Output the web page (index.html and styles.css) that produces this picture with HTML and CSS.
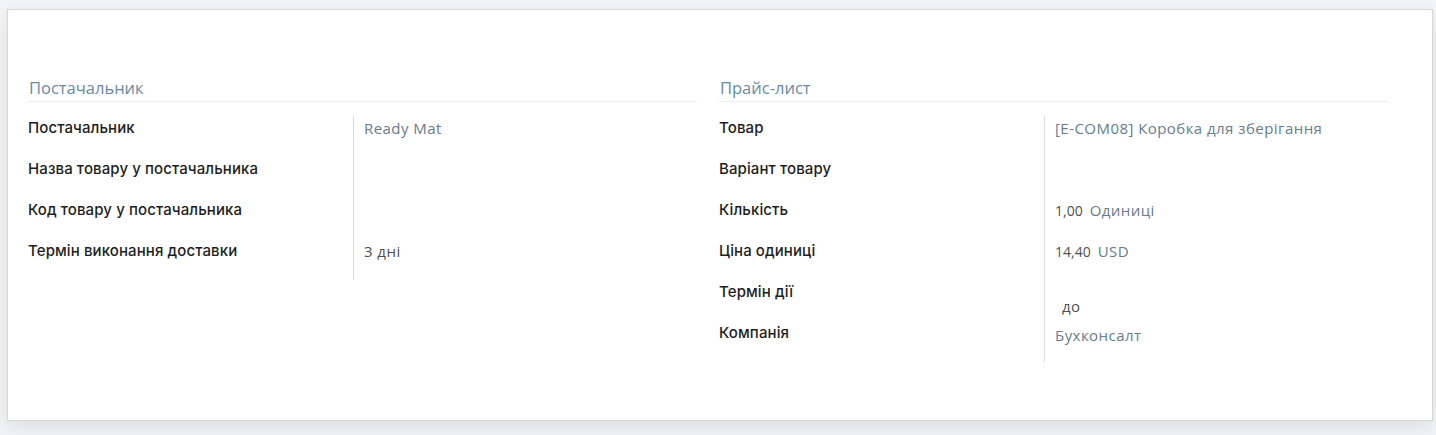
FILE: index.html
```html
<!DOCTYPE html>
<html lang="uk">
<head>
<meta charset="utf-8">
<title>Постачальник</title>
<link rel="stylesheet" href="styles.css">
</head>
<body>
<div class="sheet">
  <div class="groups">
    <section class="group">
      <h2 class="sep">Постачальник</h2>
      <div class="table">
        <div class="row"><div class="lbl">Постачальник</div><div class="val link">Ready Mat</div></div>
        <div class="row"><div class="lbl">Назва товару у постачальника</div><div class="val"></div></div>
        <div class="row"><div class="lbl">Код товару у постачальника</div><div class="val"></div></div>
        <div class="row"><div class="lbl">Термін виконання доставки</div><div class="val plain">3 дні</div></div>
      </div>
    </section>
    <section class="group">
      <h2 class="sep">Прайс-лист</h2>
      <div class="table">
        <div class="row"><div class="lbl">Товар</div><div class="val link">[E-COM08] Коробка для зберігання</div></div>
        <div class="row"><div class="lbl">Варіант товару</div><div class="val"></div></div>
        <div class="row"><div class="lbl">Кількість</div><div class="val lower"><span class="num">1,00</span><span class="link">Одиниці</span></div></div>
        <div class="row"><div class="lbl">Ціна одиниці</div><div class="val"><span class="num">14,40</span><span class="link">USD</span></div></div>
        <div class="row"><div class="lbl">Термін дії</div><div class="val dates"><span class="plain">до</span></div></div>
        <div class="row"><div class="lbl">Компанія</div><div class="val link company">Бухконсалт</div></div>
      </div>
    </section>
  </div>
</div>
</body>
</html>
```
FILE: styles.css
```css
html, body {
  margin: 0;
  padding: 0;
}
body {
  background: #f3f4f6;
  font-family: "Open Sans", "Noto Sans", sans-serif;
  width: 1436px;
  height: 435px;
  overflow: hidden;
}
.sheet {
  box-sizing: border-box;
  margin: 9px 0 0 7px;
  width: 1426px;
  height: 412px;
  background: #ffffff;
  border: 1px solid #d5d6d8;
  box-shadow: 0 6px 18px rgba(0, 0, 0, 0.09);
  padding: 67px 0 0 20px;
}
.groups {
  display: grid;
  grid-template-columns: 669px 669px;
  column-gap: 22px;
}
.sep {
  margin: 0 0 14px 0;
  font-size: 16.5px;
  font-weight: 400;
  color: #6a8aa6;
  line-height: 22px;
  padding: 0 0 2px 1px;
  border-bottom: 1px solid #eceef0;
}
.table {
  display: grid;
  grid-template-columns: 325px 1fr;
}
.row {
  display: contents;
}
.lbl {
  font-family: "Inter", "Open Sans", sans-serif;
  font-size: 15px;
  font-weight: 500;
  letter-spacing: 0.1px;
  color: #1e1e1e;
  height: 41px;
  line-height: 24px;
}
.val {
  border-left: 1px solid #dcdcdc;
  padding-left: 10px;
  height: 41px;
  line-height: 24px;
  font-size: 15px;
  letter-spacing: 0.45px;
  color: #4a4a4a;
}
.link { color: #687c8e; }
.plain { color: #505050; }
.num {
  color: #505050;
  margin-right: 7px;
  font-size: 14px;
  letter-spacing: 0;
}
.dates {
  box-sizing: border-box;
  padding-top: 14px;
  padding-left: 17px;
}
.company {
  box-sizing: border-box;
  padding-top: 2px;
}
```
